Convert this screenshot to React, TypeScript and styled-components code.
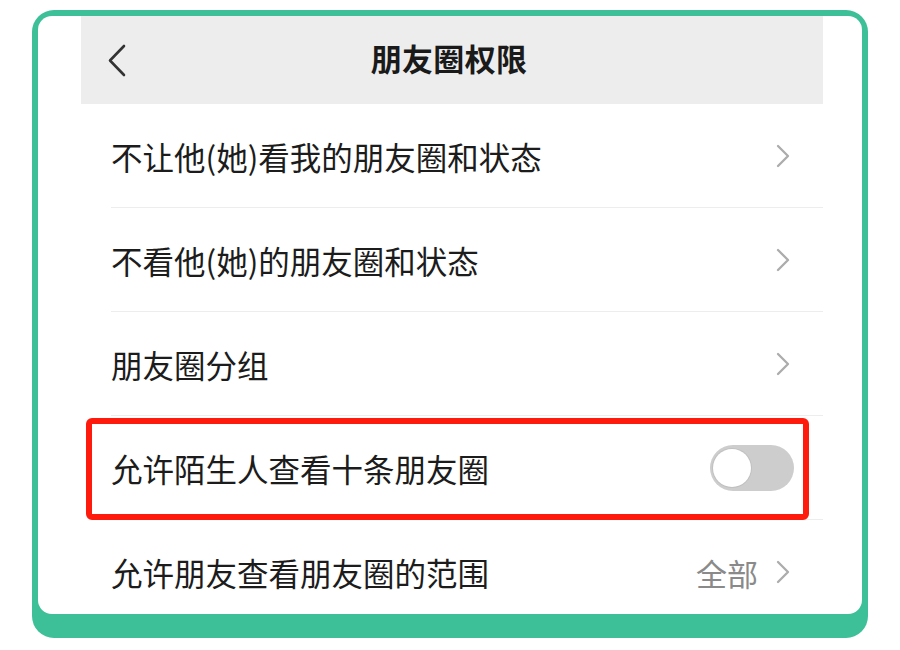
import React from 'react';
import styled, { createGlobalStyle } from 'styled-components';

const GlobalStyle = createGlobalStyle`
  html, body {
    margin: 0;
    padding: 0;
    background: #ffffff;
  }
  body {
    font-family: "Noto Sans CJK SC", "Noto Sans", sans-serif;
  }
`;

const Page = styled.div`
  width: 900px;
  height: 650px;
  padding: 10px 0 0 32px;
  box-sizing: border-box;
`;

const Frame = styled.div`
  width: 836px;
  height: 628px;
  box-sizing: border-box;
  padding: 6px 6px 24px;
  background: #3dbf97;
  border-radius: 22px;
`;

const Screen = styled.div`
  height: 100%;
  background: #ffffff;
  border-radius: 14px;
  overflow: hidden;
  padding: 0 39px 0 43px;
`;

const Header = styled.header`
  height: 88px;
  background: #ededed;
  display: grid;
  grid-template-columns: 1fr auto 1fr;
  align-items: center;
`;

const BackButton = styled.button`
  justify-self: start;
  margin-left: 26px;
  padding: 0;
  border: none;
  background: none;
  display: flex;
  align-items: center;
`;

const Title = styled.h1`
  margin: 0 6px 5px 0;
  font-size: 31px;
  font-weight: 700;
  color: #1a1a1a;
  letter-spacing: 0.3px;
`;

const List = styled.ul`
  list-style: none;
  margin: 0;
  padding: 0;
`;

const Row = styled.li`
  position: relative;
  height: 104px;
  box-sizing: border-box;
  margin-left: 30px;
  padding-right: 33px;
  border-bottom: 1px solid #ededed;
  display: flex;
  align-items: center;
  gap: 18px;
`;

const Label = styled.span`
  flex: 1;
  font-size: 31.5px;
  color: #1c1c1c;
  padding-top: 1px;
`;

const Value = styled.span`
  font-size: 31px;
  color: #8a8a8a;
  padding-top: 1px;
`;

const Track = styled.div<{ on?: boolean }>`
  width: 84px;
  height: 46px;
  box-sizing: border-box;
  margin-right: -4px;
  padding: 3px;
  border-radius: 23px;
  background: ${p => (p.on ? '#07c160' : '#cdcdcd')};
  display: flex;
  align-items: center;
  justify-content: ${p => (p.on ? 'flex-end' : 'flex-start')};
`;

const Knob = styled.div`
  width: 38px;
  height: 38px;
  border-radius: 50%;
  background: #ffffff;
  box-shadow: 0 0 0 1px rgba(0, 0, 0, 0.06);
`;

const Highlight = styled.div`
  position: absolute;
  left: -25px;
  right: 14px;
  top: 2px;
  bottom: -1px;
  border: 6px solid #fe1a0c;
  border-radius: 6px;
  pointer-events: none;
`;

const Chevron = () => (
  <svg width="14" height="24" viewBox="0 0 14 24" fill="none">
    <path d="M2 2 L12 12 L2 22" stroke="#acacac" strokeWidth="2.3" strokeLinecap="round" strokeLinejoin="round" />
  </svg>
);

const BackIcon = () => (
  <svg width="20" height="33" viewBox="0 0 20 33" fill="none">
    <path d="M17 2 L3 16.5 L17 31" stroke="#333333" strokeWidth="2.6" strokeLinecap="round" strokeLinejoin="round" />
  </svg>
);

const items = [
  { label: '不让他(她)看我的朋友圈和状态', kind: 'link' },
  { label: '不看他(她)的朋友圈和状态', kind: 'link' },
  { label: '朋友圈分组', kind: 'link' },
  { label: '允许陌生人查看十条朋友圈', kind: 'switch' },
  { label: '允许朋友查看朋友圈的范围', kind: 'link', value: '全部' },
];

export default function App() {
  return (
    <>
      <GlobalStyle />
      <Page>
        <Frame>
          <Screen>
            <Header>
              <BackButton>
                <BackIcon />
              </BackButton>
              <Title>朋友圈权限</Title>
              <span />
            </Header>
            <List>
              {items.map(item => (
                <Row key={item.label}>
                  <Label>{item.label}</Label>
                  {item.value && <Value>{item.value}</Value>}
                  {item.kind === 'switch' ? (
                    <>
                      <Track>
                        <Knob />
                      </Track>
                      <Highlight />
                    </>
                  ) : (
                    <Chevron />
                  )}
                </Row>
              ))}
            </List>
          </Screen>
        </Frame>
      </Page>
    </>
  );
}
